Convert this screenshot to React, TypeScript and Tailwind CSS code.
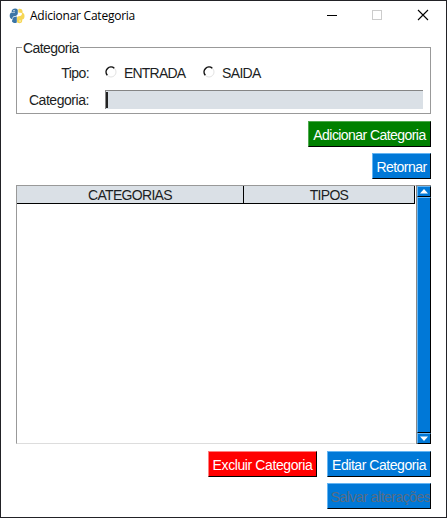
import type { ReactNode } from "react";

function PythonLogo() {
  return (
    <svg width="16" height="16" viewBox="0 0 16 16" className="shrink-0">
      <path d="M3.500 1.500C5 .3 7.500.3 8.800 1.700V5.600C8.500 7.500 7 8 5.200 8.200 3.700 8.500 3.500 9.500 3.200 11.200 1.500 11 .7 9.500.7 7.800.7 6 1.500 4.900 2.700 4.600H6V4H2.700C2.600 2.800 2.800 2.100 3.500 1.500z" fill="#3b75a5" />
      <path d="M3.600 11.300C3.600 9.700 4.600 8.900 6.200 8.800L7.800 8.600V14.500C6.300 15.600 3.700 15.100 2.900 13.300z" fill="#3b75a5" />
      <path d="M9.300 1.200C11 .3 13.200 1.100 13.500 3V4.700C15 5.100 15.700 6.500 15.500 8.500 15.400 10.400 14.600 11.400 13.200 11.500V13C13 14.800 11.100 15.600 9.300 15.100 8.400 14.800 8 14.200 8 13V10C8.200 8.600 9.200 8.200 10.800 8 12.500 7.700 13 6.700 12.900 4.900 11.800 4.800 10.500 4.500 9.300 4.500z" fill="#f6d655" />
      <circle cx="5" cy="2.700" r=".7" fill="#fff" />
      <circle cx="11" cy="13" r=".7" fill="#fff" />
    </svg>
  );
}

function Radio() {
  return (
    <svg width="12" height="12" viewBox="0 0 12 12" className="shrink-0">
      <circle cx="6" cy="6" r="5" fill="#fff" stroke="#e3e3e3" />
      <path d="M2.300 9.300A5 5 0 0 1 9.300 2.200" fill="none" stroke="#111" strokeWidth="1.500" />
    </svg>
  );
}

function Button({ className, children }: { className: string; children: ReactNode }) {
  return (
    <button
      className={`flex h-[26px] shrink-0 items-center justify-center overflow-hidden border border-r-black border-b-black pt-px whitespace-nowrap text-white ${className}`}
    >
      {children}
    </button>
  );
}

function ScrollArrow({ down = false }: { down?: boolean }) {
  return (
    <div className="flex h-[11px] w-full shrink-0 items-center justify-center border border-t-[#65b5f3] border-r-black border-b-black border-l-[#65b5f3] bg-[#0078d7]">
      <svg width="8" height="5" viewBox="0 0 8 5" className={down ? "rotate-180" : ""}>
        <path d="M4 0L8 4.500H0z" fill="#fff" />
      </svg>
    </div>
  );
}

export default function App() {
  return (
    <div className="flex h-[518px] w-[447px] flex-col border border-[#222226] bg-white font-['Liberation_Sans',Arial,sans-serif] text-[14px] leading-4 tracking-[-0.56px] text-[#1c1e23]">
      <header className="flex h-[29px] shrink-0 items-center pl-2 text-black">
        <PythonLogo />
        <h1 className="ml-[5px] font-['Open_Sans','Noto_Sans',sans-serif] text-[12px] tracking-[-0.24px]">Adicionar Categoria</h1>
        <svg width="102" height="12" viewBox="0 0 102 12" className="mr-[17px] mb-[2px] ml-auto" fill="none">
          <path d="M0 6.500H10" stroke="#000" />
          <rect x="45.500" y="1.500" width="9" height="9" stroke="#ccc" />
          <path d="M91 1L101 11M101 1L91 11" stroke="#000" strokeWidth="1.100" />
        </svg>
      </header>

      <main className="flex flex-col px-[15px] pt-[9px]">
        <fieldset className="h-[75px] min-w-0 border border-[#999] pl-[5px]">
          <legend className="h-4 px-px leading-[18px]">Categoria</legend>
          <div className="mt-[3px] flex h-[28px] items-center">
            <span className="w-[67px] pt-px text-right">Tipo:</span>
            <label className="ml-4 flex items-center gap-[7px]">
              <Radio />
              <span className="w-[61px] pt-px tracking-[-0.8px]">ENTRADA</span>
            </label>
            <label className="ml-[18px] flex items-center gap-[7px]">
              <Radio />
              <span className="pt-px tracking-[-0.65px]">SAIDA</span>
            </label>
          </div>
          <div className="flex h-[26px] items-center">
            <span className="w-[67px] pt-[2px] text-right tracking-[-0.45px]">Categoria:</span>
            <div className="ml-4 flex h-[19px] w-[318px] border-t border-l border-[#858585] bg-[#dae0e6]">
              <span className="mt-px h-4 w-[2px] bg-[#222]" />
            </div>
          </div>
        </fieldset>

        <div className="mt-[7px] flex flex-col items-end gap-[6px]">
          <Button className="w-[123px] border-t-[#4eaa4e] border-l-[#4eaa4e] bg-[#008000]">Adicionar Categoria</Button>
          <Button className="w-[59px] border-t-[#65b5f3] border-l-[#65b5f3] bg-[#0078d7]">Retornar</Button>
        </div>

        <section className="mt-[6px] flex h-[259px]">
          <div className="w-[400px] border border-[#999] border-r-transparent border-b-[#ddd]">
            <div className="flex h-[18px] border-b border-black bg-[#dae0e6] tracking-[-0.7px]">
              <div className="w-[227px] border-r border-black text-center leading-[18px]">CATEGORIAS</div>
              <div className="flex-1 border-r border-black text-center leading-[18px]">TIPOS</div>
            </div>
          </div>
          <div className="flex w-[15px] flex-col border-t border-l border-[#888] bg-[#0078d7]">
            <ScrollArrow />
            <div className="flex-1 border border-t-[#65b5f3] border-r-black border-b-black border-l-[#65b5f3]" />
            <ScrollArrow down />
          </div>
        </section>

        <div className="mt-[7px] flex justify-end gap-[10px]">
          <Button className="w-[109px] border-t-[#ff8080] border-l-[#ff8080] bg-[#ff0000] tracking-[-0.4px]">Excluir Categoria</Button>
          <Button className="w-[104px] border-t-[#65b5f3] border-l-[#65b5f3] bg-[#0078d7] tracking-[-0.45px]">Editar Categoria</Button>
        </div>
        <div className="mt-[6px] flex justify-end">
          <Button className="w-[104px] border-t-[#65b5f3] border-l-[#65b5f3] bg-[#0078d7]">
            <span className="pl-[3px] tracking-[-0.5px] text-[#596c83]">Salvar alterações</span>
          </Button>
        </div>
      </main>
    </div>
  );
}
